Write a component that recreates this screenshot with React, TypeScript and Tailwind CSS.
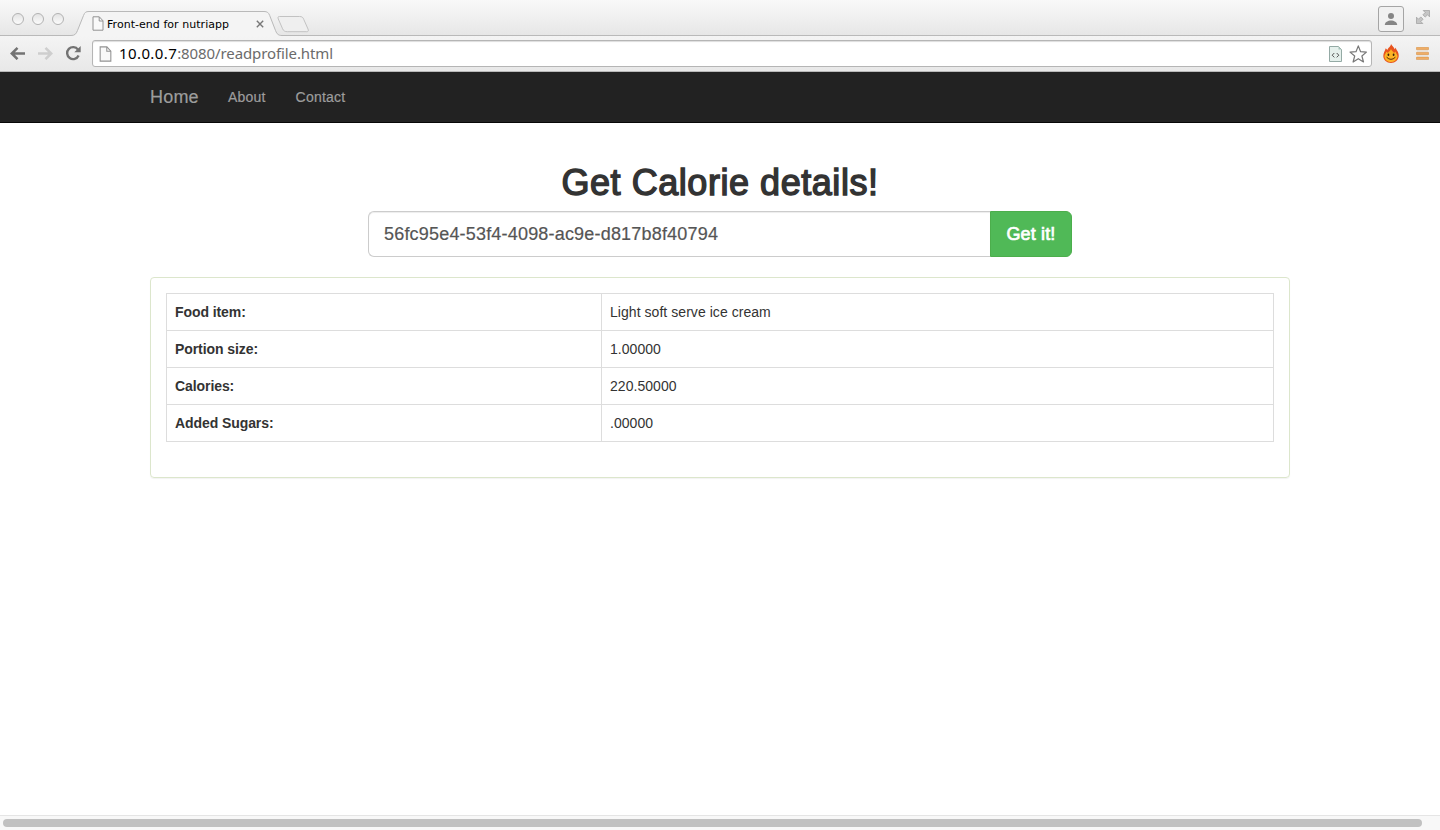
import React from "react";

const rows: [string, string][] = [
  ["Food item:", "Light soft serve ice cream"],
  ["Portion size:", "1.00000"],
  ["Calories:", "220.50000"],
  ["Added Sugars:", ".00000"],
];

function PageIcon({ className }: { className: string }) {
  return (
    <svg className={className} viewBox="0 0 12 15" fill="none">
      <path d="M1 .8H7.3L11 4.8V14.2H1Z" fill="#f9f9f9" stroke="#929292" />
      <path d="M7.2 1V5H11" stroke="#929292" />
    </svg>
  );
}

function TabStrip() {
  return (
    <div className="relative flex h-9 items-start bg-linear-to-b from-[#f9f9f9] to-[#e6e6e6]">
      <svg className="absolute inset-0 h-9 w-full" viewBox="0 0 1440 36" fill="none">
        <path
          d="M0 35.5H71C75 35.5 76 34 77.5 30.5L83.500 15.5C84.800 12.300 85.800 11.500 89 11.500H264C267.200 11.500 268.500 12.500 269.700 15.500L275.500 30.500C277 34.300 278.500 35.500 282 35.500H1440V37H0Z"
          fill="#f4f4f4"
          stroke="#b9b9b9"
        />
        <path
          d="M279.500 16.500H299.500C302 16.500 303 17.300 303.800 19.500L308 29C308.800 31 308.300 31.700 306.500 31.700H287.500C285 31.700 283.500 31 282.600 28.800L278.300 19C277.600 17.200 278 16.500 279.500 16.500Z"
          fill="#efefef"
          stroke="#c2c2c2"
        />
      </svg>
      <div className="relative flex gap-2 pt-[13px] pl-3">
        {[0, 1, 2].map((n) => (
          <span
            key={n}
            className="h-3 w-3 rounded-full border border-[#b2b2b2] bg-linear-to-b from-[#e4e4e4] to-[#fbfbfb]"
          />
        ))}
      </div>
      <div className="relative mt-[11px] ml-7 flex h-[25px] w-[172px] items-center">
        <PageIcon className="h-[15px] w-3 shrink-0" />
        <span className="mt-[2px] ml-[3px] font-['DejaVu_Sans',sans-serif] text-[11px] leading-4 tracking-[0.04px] whitespace-nowrap text-black">
          Front-end for nutriapp
        </span>
        <svg className="ml-auto h-2 w-2 shrink-0" viewBox="0 0 8 8">
          <path d="M.8 .8L7.200 7.200M7.200 .8L.8 7.200" stroke="#777" strokeWidth="1.400" />
        </svg>
      </div>
      <div className="relative mt-[6px] mr-[10px] ml-auto flex">
        <span className="flex h-[26px] w-[26px] items-center justify-center rounded-[3px] border border-[#a5a5a5] bg-[#f1f1f1]">
          <svg className="h-3 w-[14px]" viewBox="0 0 14 12" fill="#858585">
            <circle cx="7" cy="3" r="3" />
            <path d="M.8 12C.8 9 4 7.400 7 7.400S13.200 9 13.200 12Z" />
          </svg>
        </span>
        <svg className="mt-1 ml-3 h-[14px] w-[14px]" viewBox="0 0 14 14" fill="#c5c5c5" stroke="#9c9c9c" strokeWidth=".7">
          <path d="M7.200 .5H13.500V6.800L11.500 4.800L9.200 7.100L6.900 4.800L9.200 2.500Z" />
          <path d="M.5 7.200L2.500 9.200L4.800 6.900L7.100 9.200L4.800 11.500L6.800 13.500H.5Z" />
        </svg>
      </div>
    </div>
  );
}

function Toolbar() {
  return (
    <div className="flex h-9 items-start border-b border-[#b9b9b9] bg-linear-to-b from-[#f4f4f4] to-[#e8e8e8] pt-[4px]">
      <svg className="mt-[6px] ml-[10px] h-[14px] w-[15px]" viewBox="0 0 15 14" fill="none" stroke="#737373" strokeWidth="2.500">
        <path d="M15 7.500H2M7.500 1.800L1.800 7.500L7.500 13.200" />
      </svg>
      <svg className="mt-[6px] ml-[13px] h-[14px] w-[15px]" viewBox="0 0 15 14" fill="none" stroke="#cecece" strokeWidth="2.500">
        <path d="M0 7.500H13M7.500 1.800L13.200 7.500L7.500 13.200" />
      </svg>
      <svg className="mt-[5px] ml-[12px] h-4 w-4" viewBox="0 0 16 16" fill="none">
        <path d="M13 4.600A6 6 0 1 0 13.600 10.600" stroke="#737373" strokeWidth="2.400" />
        <path d="M15.700 .9V7.300H9.300Z" fill="#737373" />
      </svg>
      <div className="ml-[11px] flex h-[27px] w-[1280px] items-center rounded-[3px] border border-[#b5b5b5] bg-white shadow-[inset_0_1px_1px_#ddd]">
        <PageIcon className="ml-[6px] h-4 w-[13px] shrink-0" />
        <span className="-mt-[2px] ml-[7px] font-['Noto_Sans',sans-serif] text-[15px] leading-5 tracking-[-0.1px] whitespace-nowrap text-[#6b6b6b]">
          <span className="tracking-[0.4px] text-black">10.0.0.7</span>:8080/readprofile.html
        </span>
        <svg className="ml-auto h-4 w-[13px]" viewBox="0 0 13 16" fill="none">
          <path d="M.5 .5H9.500L12.500 3.500V15.500H.5Z" fill="#e5f0ec" stroke="#94aaa5" />
          <path d="M9.500 .5V3.500H12.500" fill="#a4c0b8" />
          <path d="M5.300 7L3.200 9.200L5.300 11.400M7.700 7L9.800 9.200L7.700 11.400" stroke="#555" />
        </svg>
        <svg className="mr-[4px] ml-[7px] h-[18px] w-[18px]" viewBox="0 0 18 18" fill="#fff" stroke="#777" strokeWidth="1.200" strokeLinejoin="round">
          <path d="M9.300 .9L11.600 6.700L17.400 7.100L12.900 11L14.500 17L9.300 13.700L4.100 17L5.700 11L1 7.100L7 6.700Z" />
        </svg>
      </div>
      <svg className="mt-1 ml-[11px] h-[19px] w-4" viewBox="0 0 16 19">
        <path d="M8 0C9 2 11 3 11.700 5.200L12.700 3.600C13 6 16 8 15.700 12C15.500 16 12.300 19 8 19S.4 16 .3 12C.2 9 2 7 2.700 4.200L4.400 6C5 3.500 7.800 3 8 0Z" fill="#e8531e" />
        <path d="M8 5C8.500 7 10.500 7.500 11 9L12.500 7.600C13 10 14.700 10.500 14.500 13C13.700 16 11 18 8 18S2 16 1.500 13C1.300 10.500 3 9.500 3.400 7.800L5 9C5.400 7.500 7.500 7 8 5Z" fill="#fcb324" />
        <ellipse cx="5.400" cy="10.800" rx=".9" ry="1.300" fill="#3b210b" />
        <ellipse cx="10.600" cy="10.800" rx=".9" ry="1.300" fill="#3b210b" />
        <path d="M3.600 13.200Q8 17.500 12.400 13.200" fill="none" stroke="#5d2909" />
      </svg>
      <svg className="mt-[7px] ml-[17px] h-[13px] w-[13px]" viewBox="0 0 13 13" fill="#f0ad65" stroke="#ce8a42" strokeWidth=".5">
        <rect x=".3" y=".3" width="12.400" height="2.500" rx=".7" />
        <rect x=".3" y="5.200" width="12.400" height="2.500" rx=".7" />
        <rect x=".3" y="10.100" width="12.400" height="2.500" rx=".7" />
      </svg>
    </div>
  );
}

export default function App() {
  return (
    <div className="flex h-[830px] w-[1440px] flex-col overflow-hidden bg-white font-['Liberation_Sans',Arial,sans-serif] text-sm text-[#333]">
      <TabStrip />
      <Toolbar />
      <nav className="flex h-[51px] items-start border-b border-[#080808] bg-[#222] pl-[150px] text-[#9d9d9d] [-webkit-text-stroke:0.2px_#9d9d9d]">
        <a className="mt-[15px] w-12 text-lg leading-5 tracking-[0.2px]">Home</a>
        <a className="mt-[15px] ml-[30px] leading-5 tracking-[0.2px]">About</a>
        <a className="mt-[15px] ml-[30px] leading-5 tracking-[0.2px]">Contact</a>
      </nav>
      <main className="flex flex-1 flex-col items-center pt-10">
        <h1 className="h-10 text-4xl leading-10 tracking-[0.55px] whitespace-nowrap [-webkit-text-stroke:1.4px_#333]">Get Calorie details!</h1>
        <form className="mt-2 flex h-[46px] w-[704px]" onSubmit={(e) => e.preventDefault()}>
          <input
            className="w-[622px] rounded-l-md border border-r-0 border-[#ccc] px-[15px] text-lg tracking-[0.19px] text-[#555] shadow-[inset_0_1px_1px_rgba(0,0,0,.075)] outline-none [-webkit-text-stroke:0.2px_#555]"
            defaultValue="56fc95e4-53f4-4098-ac9e-d817b8f40794"
          />
          <button className="flex-1 rounded-r-md border border-[#4cae4c] bg-[#50b957] text-lg tracking-[0.15px] text-white [-webkit-text-stroke:0.7px_#fff]">
            Get it!
          </button>
        </form>
        <section className="mt-5 h-[201px] w-[1140px] rounded border border-[#dce6cc] p-[15px] shadow-[0_1px_1px_rgba(0,0,0,.05)]">
          <table className="w-[1108px] table-fixed border-collapse">
            <tbody>
              {rows.map(([label, value]) => (
                <tr key={label} className="h-[37px]">
                  <th className="w-[435px] border border-[#ddd] px-2 py-0 text-left leading-5 font-bold tracking-[-0.08px]">{label}</th>
                  <td className="border border-[#ddd] px-2 py-0 leading-5 tracking-[0.05px]">{value}</td>
                </tr>
              ))}
            </tbody>
          </table>
        </section>
      </main>
      <div className="h-[15px] border-t border-[#e5e5e5] bg-[#f8f8f8] pt-[3px] pl-[3px]">
        <div className="h-2 w-[1419px] rounded-full bg-[#c1c1c1]" />
      </div>
    </div>
  );
}
